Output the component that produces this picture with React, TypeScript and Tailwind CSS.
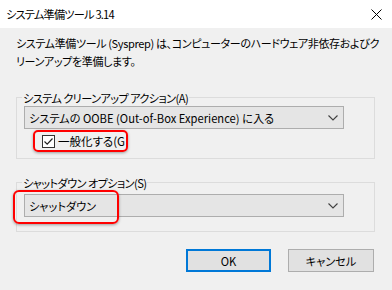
import React from "react";

const Chevron = () => (
  <svg width="10" height="6" viewBox="0 0 10 6" className="shrink-0">
    <path d="M0.5 0.5 L5 5 L9.5 0.5" fill="none" stroke="#404040" strokeWidth="1.1" />
  </svg>
);

const Combo = ({ text }: { text: string }) => (
  <div className="flex h-[23px] w-[320px] items-center justify-between border border-[#adadad] bg-[#e5e5e5] pl-[4px] pr-[5px] text-[11.2px] leading-[16px] text-black">
    <span>{text}</span>
    <Chevron />
  </div>
);

export default function App() {
  return (
    <div
      className="relative flex h-[290px] w-[392px] flex-col overflow-hidden bg-[#f0f0f0] text-black [font-feature-settings:'palt']"
      style={{ fontFamily: '"Noto Sans CJK JP", "Noto Sans", sans-serif' }}
    >
      {/* Title bar */}
      <div className="flex h-[28px] shrink-0 items-center justify-between bg-white pl-[6px] pr-[10px]">
        <span className="text-[11.2px] leading-[16px] tracking-[-0.8px]">システム準備ツール 3.14</span>
        <svg width="11" height="11" viewBox="0 0 11 11">
          <path d="M0.5 0.5 L10.5 10.5 M10.5 0.5 L0.5 10.5" stroke="#000" strokeWidth="1" />
        </svg>
      </div>

      {/* Description */}
      <div className="flex flex-col px-[16px] pt-[6px] text-[11px] leading-[18px] tracking-[-0.35px]">
        <span className="whitespace-nowrap">システム準備ツール (Sysprep) は、コンピューターのハードウェア非依存およびク</span>
        <span className="whitespace-nowrap">リーンアップを準備します。</span>
      </div>

      {/* Group 1 */}
      <div className="ml-[16px] mt-[27px] flex h-[62px] w-[359px] flex-col border border-[#dcdcdc]">
        <span className="-mt-[8px] ml-[5px] self-start bg-[#f0f0f0] px-[1px] text-[11.2px] leading-[16px] tracking-[-0.6px]">
          システム クリーンアップ アクション(A)
        </span>
        <div className="ml-[7px]">
          <Combo text="システムの OOBE (Out-of-Box Experience) に入る" />
        </div>
        <div className="ml-[16px] mt-[1px] flex h-[22px] w-[95px] items-center overflow-hidden rounded-[5px] border-2 border-[#f00] pl-[7px] shadow-[0_1px_3px_rgba(0,0,0,0.35)]">
          <div className="flex h-[13px] w-[13px] shrink-0 items-center justify-center border border-[#333] bg-white">
            <svg width="11" height="11" viewBox="0 0 11 11">
              <path d="M1.5 5.5 L4.2 8.2 L9.5 2.5" fill="none" stroke="#222" strokeWidth="1.2" />
            </svg>
          </div>
          <span className="ml-[3px] whitespace-nowrap text-[11.5px] leading-[16px]">一般化する(G</span>
        </div>
      </div>

      {/* Group 2 */}
      <div className="ml-[16px] mt-[23px] flex h-[50px] w-[359px] flex-col border border-[#dcdcdc]">
        <span className="-mt-[8px] ml-[5px] self-start bg-[#f0f0f0] px-[1px] text-[11.2px] leading-[16px] tracking-[-0.6px]">
          シャットダウン オプション(S)
        </span>
        <div className="ml-[7px] mt-[3px]">
          <Combo text="シャットダウン" />
        </div>
      </div>

      {/* Buttons */}
      <div className="mr-[18px] mt-[17px] flex justify-end gap-[17px]">
        <button className="flex h-[23px] w-[85px] items-center justify-center border-2 border-[#0078d7] bg-[#e1e1e1] text-[11.2px] leading-[16px]">
          OK
        </button>
        <button className="flex h-[23px] w-[86px] items-center justify-center border border-[#adadad] bg-[#e1e1e1] text-[11.2px] leading-[16px]">
          キャンセル
        </button>
      </div>

      {/* Red annotation over shutdown combo */}
      <div className="pointer-events-none absolute left-[13px] top-[190px] h-[34px] w-[106px] rounded-[6px] border-2 border-[#f00] shadow-[0_1px_3px_rgba(0,0,0,0.35)]" />
    </div>
  );
}
